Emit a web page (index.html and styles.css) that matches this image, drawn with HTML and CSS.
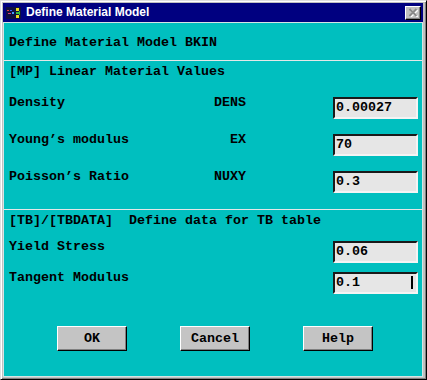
FILE: index.html
```html
<!DOCTYPE html>
<html lang="en">
<head>
  <meta charset="UTF-8">
  <title>Define Material Model</title>
  <link rel="stylesheet" href="styles.css">
</head>
<body>

  <div class="window">

    <!-- title bar -->
    <div class="titlebar">
      <svg class="app-icon" width="15" height="12" viewBox="0 0 15 12">
        <rect x="0" y="0" width="15" height="12" fill="#101040"/>
        <rect x="1" y="3" width="2" height="1" fill="#e04040"/>
        <rect x="4" y="3" width="2" height="1" fill="#4060ff"/>
        <rect x="2" y="6" width="3" height="1" fill="#e04080"/>
        <rect x="6" y="5" width="2" height="2" fill="#40a0ff"/>
        <rect x="10" y="1" width="3" height="3" fill="#f0e020"/>
        <rect x="10" y="5" width="3" height="2" fill="#30c040"/>
        <rect x="10" y="8" width="3" height="3" fill="#f0e020"/>
        <rect x="13" y="4" width="1" height="4" fill="#30c040"/>
      </svg>
      <span class="title">Define Material Model</span>
      <span class="close-btn">
        <svg width="10" height="9" viewBox="0 0 10 9">
          <path d="M1.5 1 L8.5 8 M8.5 1 L1.5 8" stroke="#ffffff" stroke-width="2" transform="translate(1,1)"/>
          <path d="M1.5 1 L8.5 8 M8.5 1 L1.5 8" stroke="#8a8a8a" stroke-width="2"/>
        </svg>
      </span>
    </div>

    <!-- dialog body -->
    <div class="client">
      <div class="head">Define Material Model BKIN</div>

      <div class="group group-mp">
        <div class="group-title">[MP] Linear Material Values</div>
        <div class="rows rows-mp">
          <div class="row">
            <span class="label">Density</span>
            <span class="code">DENS</span>
            <div class="field">0.00027</div>
          </div>
          <div class="row">
            <span class="label">Young’s modulus</span>
            <span class="code">EX</span>
            <div class="field">70</div>
          </div>
          <div class="row">
            <span class="label">Poisson’s Ratio</span>
            <span class="code">NUXY</span>
            <div class="field">0.3</div>
          </div>
        </div>
      </div>

      <div class="group group-tb">
        <div class="group-title">[TB]/[TBDATA]&nbsp;&nbsp;Define data for TB table</div>
        <div class="rows rows-tb">
          <div class="row">
            <span class="label">Yield Stress</span>
            <div class="field">0.06</div>
          </div>
          <div class="row">
            <span class="label">Tangent Modulus</span>
            <div class="field"><span>0.1</span><span class="caret"></span></div>
          </div>
        </div>
      </div>

      <div class="buttons">
        <button>OK</button>
        <button>Cancel</button>
        <button>Help</button>
      </div>
    </div>

  </div>

</body>
</html>
```

FILE: styles.css
```css
* {
  box-sizing: border-box;
}

html, body {
  margin: 0;
  padding: 0;
  background: #c0c0c0;
}

.window {
  width: 427px;
  height: 380px;
  display: flex;
  flex-direction: column;
  background: #c0c0c0;
  border: 1px solid;
  border-color: #dfdfdf #000 #000 #dfdfdf;
  box-shadow: inset 1px 1px #fff, inset -1px -1px #808080;
  padding: 2px 3px 2px 2px;
}

.titlebar {
  height: 19px;
  flex: none;
  display: flex;
  align-items: center;
  background: #000080;
  padding: 0 2px 0 3px;
}

.app-icon {
  display: block;
  margin-right: 5px;
}

.title {
  flex: 1;
  color: #fff;
  font-family: "Liberation Sans", Arial, sans-serif;
  font-weight: bold;
  font-size: 12px;
  line-height: 19px;
}

.close-btn {
  width: 16px;
  height: 14px;
  display: flex;
  align-items: center;
  justify-content: center;
  background: #c0c0c0;
  border: 1px solid;
  border-color: #fff #000 #000 #fff;
  box-shadow: inset -1px -1px #808080;
}

.client {
  flex: 1;
  display: flex;
  flex-direction: column;
  background: #00bfbf;
  border: 1px solid #d4e4e4;
  font-family: "Liberation Mono", "DejaVu Sans Mono", monospace;
  font-weight: bold;
  font-size: 13.33px;
  color: #000;
}

.head {
  padding: 13px 5px 10px;
  line-height: 14px;
  border-bottom: 1px solid #e4e8e8;
}

.group {
  padding: 4px 4px 0 5px;
}

.group-mp {
  padding-bottom: 16px;
  border-bottom: 1px solid #e4e8e8;
}

.group-title {
  line-height: 14px;
  white-space: pre;
}

.rows {
  display: flex;
  flex-direction: column;
}

.rows-mp {
  margin-top: 18px;
  gap: 15px;
}

.rows-tb {
  margin-top: 13px;
  gap: 9px;
}

.row {
  display: flex;
  align-items: flex-start;
}

.label {
  flex: 1;
  line-height: 12px;
}

.code {
  width: 80px;
  margin-right: 87px;
  text-align: right;
  line-height: 12px;
}

.field {
  width: 85px;
  height: 22px;
  display: flex;
  align-items: center;
  justify-content: space-between;
  padding: 0 3px 1px 1px;
  background: #e6e6e6;
  border: 2px solid;
  border-color: #1a1a1a #f4f4f4 #f4f4f4 #1a1a1a;
  line-height: 16px;
}

.caret {
  width: 2px;
  height: 13px;
  background: #000;
}

.buttons {
  margin-top: 32px;
  padding-left: 4px;
  display: flex;
  justify-content: center;
  gap: 53px;
}

button {
  width: 70px;
  height: 25px;
  padding: 0;
  font-family: "Liberation Mono", "DejaVu Sans Mono", monospace;
  font-weight: bold;
  font-size: 13.33px;
  color: #000;
  background: #c4c4c4;
  border: 1px solid;
  border-color: #fff #000 #000 #fff;
  box-shadow: inset -1px -1px #808080;
}
```
